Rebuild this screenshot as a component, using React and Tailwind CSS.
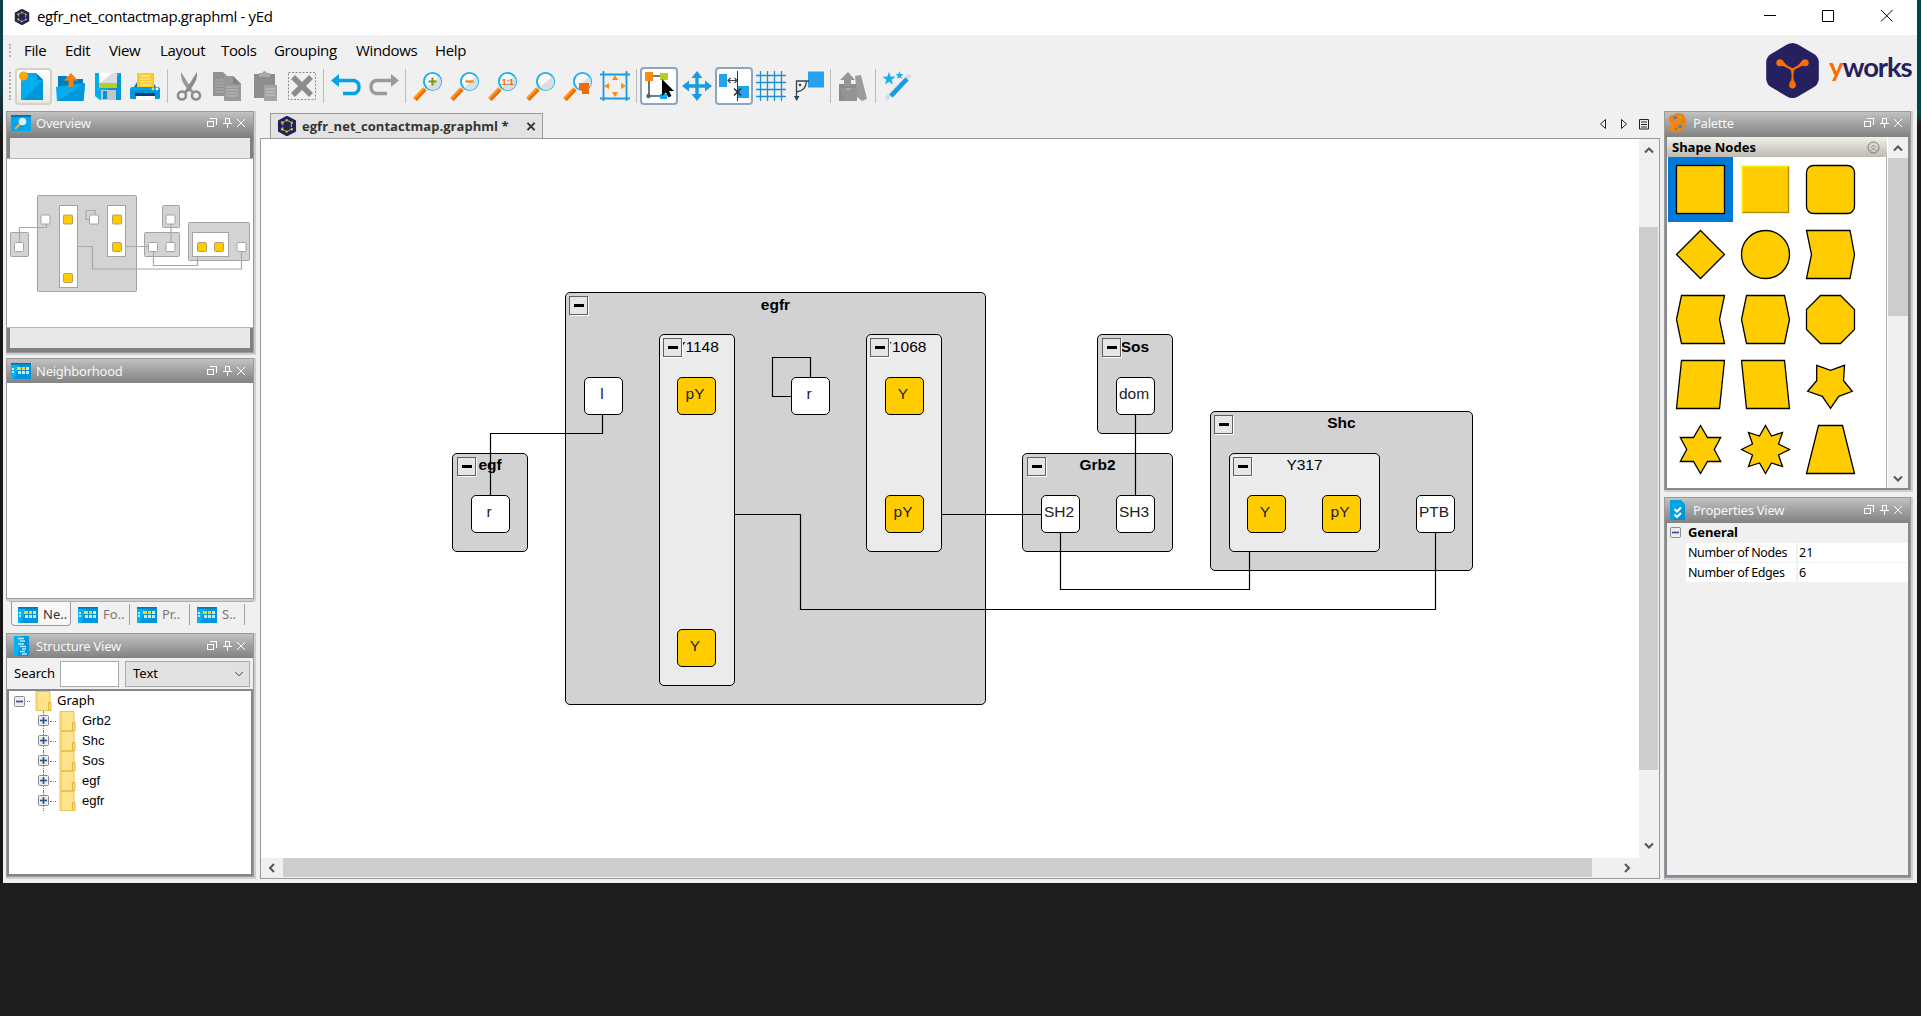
import React from "react";

const HEAD_GRAD = "bg-linear-to-b from-[#c2c2c2] via-[#a0a0a0] to-[#828282]";

/* ---------- logos ---------- */
function YedLogo({ className }) {
  return (
    <svg viewBox="0 0 20 20" className={className}>
      <path d="M10 .5 18.3 5v10L10 19.5 1.7 15V5z" fill="#25205f" stroke="#25205f" strokeWidth="1.500" strokeLinejoin="round" />
      <path d="M8.3 5.2 5.8 6.6v3M5.8 11v2.6l3 1.6M10.5 15.3l3.2-1.7M11 4.7l3 1.7M14.3 8v3" fill="none" stroke="#b5d81c" strokeWidth=".9" />
      <g fill="#b5d81c">
        <circle cx="9.7" cy="4.3" r="1.2" /><circle cx="5.2" cy="6.6" r="1.3" /><circle cx="14.8" cy="6.8" r="1.2" />
        <circle cx="5.2" cy="13.2" r="1.3" /><circle cx="9.7" cy="15.6" r="1.2" /><circle cx="14.8" cy="13.2" r="1.2" />
      </g>
    </svg>
  );
}

function YWorks() {
  return (
    <div className="mt-[7px] mr-[5px] flex items-start">
      <svg viewBox="0 0 53 57" className="h-[57px] w-[53px]">
        <path d="M21 2.5Q26.500 -.5 32 2.500L48 12Q52.500 15 52.800 19.500V37Q52.500 42 48 45L32 54.500Q26.500 57.500 21 54.500L5 45Q.5 42 .2 37V19.500Q.5 15 5 12z" fill="#25205f" />
        <path d="M12.500 20.500Q21 24.500 26.500 27.500Q32 24.500 40.500 20.500M26.500 27.500V42" fill="none" stroke="#ff6c00" strokeWidth="2" />
        <path d="M24 26.500l2.500 2.800 2.500-2.800-2.500 7z" fill="#ff6c00" />
        <circle cx="13.800" cy="20.800" r="3.500" fill="#ff6c00" /><circle cx="39.200" cy="20.800" r="3.500" fill="#ff6c00" />
        <path d="M26.500 34c.5 5 3.400 5.500 3.400 9a3.400 3.400 0 0 1-6.800 0c0-3.500 2.900-4 3.400-9zM15 17.500c3 1.500 4 4.500 8 7.500-4-1.500-6.500-1-9.500-1zM38 17.500c-3 1.500-4 4.500-8 7.500 4-1.500 6.500-1 9.500-1z" fill="#ff6c00" />
      </svg>
      <div className="mt-[6px] ml-[10px] w-[83px] text-[27.500px] leading-[38px] font-bold tracking-[-1.1px] whitespace-nowrap text-[#25205f] font-['Lato',sans-serif]">
        <span className="text-[#ff6c00]">y</span>works
      </div>
    </div>
  );
}

/* ---------- toolbar icons ---------- */
const Ic = ({ children }) => <svg viewBox="0 0 30 30" className="h-[30px] w-[30px] shrink-0">{children}</svg>;

const NewIcon = () => (
  <div className="flex h-[37px] w-[37px] items-center rounded-[4px] border-2 border-[#d2d2c6] bg-linear-to-b from-[#fefefd] to-[#e9e9e2] pl-[1px]">
    <Ic>
      <path d="M3 2h15l7 7v20H3z" fill="#00adef" /><path d="M25 9v20H5z" fill="#0095da" /><path d="M18 2l7 7h-5z" fill="#0080c4" />
      <circle cx="5.500" cy="5" r="4.600" fill="#ffa30f" />
    </Ic>
  </div>
);
const OpenIcon = () => (
  <Ic>
    <path d="M2 5h9l2 3h14v12H2z" fill="#0080bf" />
    <path d="M0 16l29-4-1.500 18H1z" fill="#00adef" /><path d="M29 12l-1.500 18H1z" fill="#0098dc" />
    <path d="M15 2l7 7.500h-4.500V16h-5V9.500H8z" fill="#f57f17" />
  </Ic>
);
const SaveIcon = () => (
  <Ic>
    <path d="M2 2h26v27H7l-5-4z" fill="#00adef" /><path d="M28 2v27H7z" fill="#0095da" />
    <path d="M6 2h18v15H6z" fill="#d9dde1" /><path d="M6 2h13L7 12H6z" fill="#fff" /><path d="M6 12h18v5H6z" fill="#b3d020" />
    <path d="M8 19h15v10H8z" fill="#c4c4c4" /><path d="M10 20h4v8h-4z" fill="#0095da" />
  </Ic>
);
const PrintIcon = () => (
  <Ic>
    <path d="M4 16l3-5h16l3 5z" fill="#0075b8" />
    <path d="M7 2h17v16H7z" fill="#ffc91f" /><path d="M10 5h10M10 8h11M10 11h11M10 14h11" stroke="#fff3c4" strokeWidth="1.200" />
    <rect y="16" width="30" height="12" rx="2" fill="#00a3e6" /><path d="M0 19h30v7q0 2-2 2H2q-2 0-2-2z" fill="#0095da" />
    <path d="M6 24h19v5H6z" fill="#fff" /><path d="M5 22h20v3H5z" fill="#073f78" />
    <circle cx="23" cy="18" r="1.400" fill="#d8e22c" /><circle cx="27" cy="18" r="1.400" fill="#e8f4fb" />
  </Ic>
);
const CutIcon = () => (
  <Ic>
    <g stroke="#8b8b8b" fill="none"><circle cx="8" cy="24.500" r="4" strokeWidth="2.600" /><circle cx="22" cy="24.500" r="4" strokeWidth="2.600" /></g>
    <path d="M7 1l10.500 16.500L20 21l-3 .8-3.500-3.500C9 12 6.500 8 7 1z" fill="#999" /><path d="M23 1L12.500 17.500 10 21l3 .8 3.500-3.500C21 12 23.500 8 23 1z" fill="#8b8b8b" />
  </Ic>
);
const CopyIcon = () => (
  <Ic>
    <path d="M1 1h10l6 6v18H1z" fill="#929292" /><path d="M3 9h10M3 12h10M3 15h10M3 18h10M3 21h10" stroke="#b0b0b0" />
    <path d="M12 5h9l8 8v18H12z" fill="#999" /><path d="M21 5l8 8h-8z" fill="#828282" /><path d="M14 16h12M14 19h12M14 22h12M14 25h12" stroke="#bcbcbc" />
  </Ic>
);
const PasteIcon = () => (
  <Ic>
    <path d="M4 3h21v24H4z" fill="#8d8d8d" /><path d="M9 2h3q2.500-4 5 0h3v4H9z" fill="#a8a8a8" />
    <path d="M14 14h13v16H14z" fill="#a3a3a3" /><path d="M16 18h9M16 21h9M16 24h9" stroke="#c8c8c8" strokeWidth="1.200" />
  </Ic>
);
const DeleteIcon = () => (
  <Ic>
    <rect x="1.500" y="1.500" width="27" height="27" fill="none" stroke="#8c8c8c" strokeDasharray="2 1.500" />
    <path d="M6 6l18 18M24 6L6 24" stroke="#8c8c8c" strokeWidth="5.500" />
  </Ic>
);
const UndoIcon = () => (
  <Ic><path d="M4 9.500h19q5 1 5 6.500T23 22.500H12" fill="none" stroke="#00a3e8" strokeWidth="3.400" /><path d="M0 9.500l8-6.500v13z" fill="#00a3e8" /></Ic>
);
const RedoIcon = () => (
  <Ic><path d="M26 9.500H7q-5 1-5 6.500T7 22.500h11" fill="none" stroke="#9a9a9a" strokeWidth="3.400" /><path d="M30 9.500l-8-6.500v13z" fill="#9a9a9a" /></Ic>
);
const Lens = ({ children }) => (
  <Ic>
    <path d="M2 28.500L12 18" stroke="#ef6c00" strokeWidth="4.600" /><path d="M1 27.500L11 17" stroke="#ff9a1f" strokeWidth="2" />
    <circle cx="19.500" cy="10.500" r="8.600" fill="#fafafa" stroke="#18aef0" strokeWidth="1.900" />
    <path d="M26 5.500a7.500 7.500 0 0 1-12 11z" fill="#d9dee1" />
    {children}
  </Ic>
);
const ZoomIn = () => <Lens><path d="M15.500 10.500h8M19.500 6.500v8" stroke="#7c9d10" strokeWidth="2.200" /></Lens>;
const ZoomOut = () => <Lens><path d="M15.500 10.500h8" stroke="#f57c14" strokeWidth="2.200" /></Lens>;
const ZoomOne = () => (
  <Lens><text x="19.500" y="14" textAnchor="middle" className="text-[9.500px] font-bold tracking-[-0.5px] font-['Liberation_Sans',sans-serif]" fill="#ef6c00">1:1</text></Lens>
);
const ZoomPlain = () => <Lens />;
const ZoomArea = () => <Lens><path d="M16 12h10v11h-7v-4h-3z" fill="#ef6c00" /></Lens>;
const FitIcon = () => (
  <Ic>
    <path d="M0 3.500h30M0 27.500h30M3.500 0v30M26.500 0v30" stroke="#1a9be0" strokeWidth="1.800" />
    <path d="M15 4l3 5h-6zM15 26l3-5h-6zM4 15l5-3v6zM26 15l-5-3v6z" fill="#ff8a0c" />
  </Ic>
);
const Pressed = ({ children }) => (
  <div className="flex h-[38px] w-[38px] items-center justify-center rounded-[4px] border-2 border-[#8ba6bd] bg-white">{children}</div>
);
const EditIcon = () => (
  <Pressed>
    <Ic>
      <path d="M5 9v16h16M9 5h12" fill="none" stroke="#44555f" strokeWidth="1.600" />
      <path d="M1 1h8v9H1z" fill="#ff8a0c" /><path d="M16 2h8v7h-8z" fill="#b3d020" /><path d="M16 23h7v5h-7z" fill="#00adef" />
      <circle cx="4.500" cy="25" r="2.200" fill="#53646e" />
      <path d="M18 8v17l4-3.500 2.500 5 3-1.500-2.500-5h5z" fill="#000" />
    </Ic>
  </Pressed>
);
const MoveIcon = () => (
  <Ic>
    <path d="M15 4v22M4 15h22" stroke="#1a9be0" strokeWidth="3.400" />
    <path d="M15 0l5.500 7h-11zM15 30l5.500-7h-11zM0 15l7-5.500v11zM30 15l-7-5.500v11z" fill="#1a9be0" />
  </Ic>
);
const SnapIcon = () => (
  <Pressed>
    <Ic>
      <path d="M0 3h8v13H0z" fill="#25a2ee" /><path d="M19 15h11v12H19z" fill="#25a2ee" />
      <path d="M18.500 0v30" stroke="#333" /><path d="M9 9.500h9M11.500 7L9 9.500l2.500 2.500M15.500 7L18 9.500 15.500 12" fill="none" stroke="#37444d" strokeWidth="1.200" />
      <path d="M15 17.500l7 7M22 17.500l-7 7" stroke="#2a333a" strokeWidth="1.600" />
    </Ic>
  </Pressed>
);
const GridIcon = () => (
  <Ic><path d="M0 4.500h30M0 11.500h30M0 18.500h30M0 25.500h30M4.500 0v30M11.500 0v30M18.500 0v30M25.500 0v30" stroke="#1a8fd2" strokeWidth="1.300" /></Ic>
);
const OrthoIcon = () => (
  <Ic>
    <path d="M14 .5h16v16H14z" fill="#25a2ee" /><path d="M2.500 29V10H15M2.500 21Q12 20 12.500 10" fill="none" stroke="#37444d" strokeWidth="1.300" />
    <circle cx="6" cy="14" r="1.300" fill="#37444d" /><path d="M0 25h5.500l-2.700 5z" fill="#37444d" />
  </Ic>
);
const BookIcon = () => (
  <Ic>
    <path d="M1 13h18v17H1z" fill="#8b8b8b" /><path d="M10 1l7 8h-4v6H6V9H2z" fill="#969696" /><path d="M1 17h18v13H8z" fill="#949494" />
    <path d="M8 17h5v2H8z" fill="#aaa" /><path d="M17 5l6-1 6 24-5 2-5-4z" fill="#9b9b9b" />
  </Ic>
);
const Wand = () => (
  <Ic>
    <path d="M4 28L28 4" stroke="#d6dde2" strokeWidth="4" /><path d="M9 25L25 8" stroke="#1a9be0" strokeWidth="4.600" />
    <path d="M7 1l1.600 4.500 4.900.2L9.700 8.800 11 13.500 7 10.800 3 13.500l1.300-4.700L.5 5.700l4.900-.2zM17.500 0l1 3 3 .1-2.400 2 .8 3-2.400-1.800-2.500 1.800.9-3-2.400-2 3-.1z" fill="#18b0f2" />
  </Ic>
);
const Sep = () => <div className="h-[34px] w-px bg-[#bdbdbd]" />;

const TOOLBAR = [
  [NewIcon, "ml-[3px]"], [OpenIcon, "ml-[4px]"], [SaveIcon, "ml-[7px]"], [PrintIcon, "ml-[7px]"], [Sep, "ml-[7px]"],
  [CutIcon, "ml-[6px]"], [CopyIcon, "ml-[8px]"], [PasteIcon, "ml-[8px]"], [DeleteIcon, "ml-[7px]"], [Sep, "ml-[6px]"],
  [UndoIcon, "ml-[7px]"], [RedoIcon, "ml-[8px]"], [Sep, "ml-[6px]"],
  [ZoomIn, "ml-[7px]"], [ZoomOut, "ml-[7px]"], [ZoomOne, "ml-[8px]"], [ZoomPlain, "ml-[8px]"], [ZoomArea, "ml-[7px]"], [FitIcon, "ml-[7px]"], [Sep, "ml-[6px]"],
  [EditIcon, "ml-[3px]"], [MoveIcon, "ml-[4px]"], [SnapIcon, "ml-[3px]"], [GridIcon, "ml-[3px]"], [OrthoIcon, "ml-[8px]"], [Sep, "ml-[6px]"],
  [BookIcon, "ml-[7px]"], [Sep, "ml-[7px]"], [Wand, "ml-[6px]"],
];

/* ---------- docked panels ---------- */
function WinButtons() {
  return (
    <svg viewBox="0 0 39 12" className="h-[12px] w-[39px]" fill="none" stroke="#fff" shapeRendering="crispEdges">
      <path d="M.5 4.500h6v5h-6zM0 4h7M3 1.500h6.500v6M3 1h7" />
      <path d="M18.500 1.500h4v5h-4zM16 6.500h9M20.500 7v4" />
      <path d="M30 2l8 8M38 2l-8 8" shapeRendering="auto" />
    </svg>
  );
}

function Panel({ icon, title, className, header, children }) {
  return (
    <section className={`flex flex-col border border-[#9a9a9a] shadow-[1px_1px_0_1px_#cfcfcf] ${className}`}>
      <header className={`flex shrink-0 items-center pr-[7px] ${HEAD_GRAD} ${header}`}>
        <span className="flex w-[25px] items-center">{icon}</span>
        <span className="grow text-[13px] leading-[18px] tracking-[-0.25px] text-[#f6f6f6]">{title}</span>
        <WinButtons />
      </header>
      {children}
    </section>
  );
}

const OverviewIcon = () => (
  <svg viewBox="0 0 20 16" className="h-[16px] w-[20px]"><path d="M0 0h20v16H0z" fill="#00a8f0" /><path d="M0 0h20v2H0z" fill="#0077b8" /><path d="M4 14l5-5" stroke="#ffab1f" strokeWidth="2" /><circle cx="11.500" cy="6.500" r="3.800" fill="#d5f1ff" /></svg>
);
const DockIcon = () => (
  <svg viewBox="0 0 20 16" className="h-[16px] w-[20px]">
    <path d="M0 0h20v16H0z" fill="#0095da" /><path d="M0 2h8L3 16H0z" fill="#00b4f4" /><path d="M0 0h20v1.500H0z" fill="#0077b8" />
    <path d="M6 4h4v3H6zM11 4h3v3h-3z" fill="#ffd21f" /><path d="M15 4h3v3h-3zM7 8h3v3H7zM11 8h3v3h-3zM15 8h3v3h-3zM1 5h2v2H1zM1 8h2v2H1z" fill="#cfe8f6" />
  </svg>
);
const StructIcon = () => (
  <svg viewBox="0 0 20 20" className="h-[20px] w-[20px]"><path d="M3 0h15v20H3z" fill="#0098dc" /><path d="M3 0h9L6 20H3z" fill="#00b4f4" /><path d="M7 2.500h6M9 5h5M7 8h6M9 10.500h6M11 13h4M9 15.500h5M11 18h5" stroke="#c3e6f8" strokeWidth="1.300" /></svg>
);
const PaletteIcon = () => (
  <svg viewBox="0 0 20 20" className="h-[20px] w-[20px]">
    <path d="M7 2q6-2 8 1t2 6-3 6-7 3-5-2 2-3-1-5 6-6z" fill="#f58216" stroke="#f58216" strokeWidth="2.500" strokeLinejoin="round" />
    <circle cx="7" cy="4.500" r="1.600" fill="#0095da" /><circle cx="12" cy="4" r="1.400" fill="#a7c51a" /><circle cx="15" cy="8" r="1.500" fill="#8aa61a" /><circle cx="12" cy="13.500" r="1.700" fill="#1a8fd2" /><circle cx="8" cy="16" r="1.500" fill="#6a9a2a" />
  </svg>
);
const PropsIcon = () => (
  <svg viewBox="0 0 20 20" className="h-[20px] w-[20px]"><path d="M2 0h11l4 4v16H2z" fill="#00a3e6" /><path d="M17 4v16H5z" fill="#0095da" /><path d="M6.500 9l2.500 2.500L13 7.500M6.500 14.500l2.500 2.500 4-4" fill="none" stroke="#fff" strokeWidth="2" /></svg>
);

/* miniature of the graph */
const MINI_GROUPS = [
  [37.5, 195.5, 99, 96], [10.5, 232.5, 18, 24], [162.500, 205.500, 17, 22], [144.500, 232.500, 35, 24], [188.500, 222.500, 61, 38],
];
const MINI_INNER = [[59.500, 205.500, 18, 82], [107.500, 205.500, 18, 51], [192.500, 232.500, 36, 24]];
const MINI_NODES = [
  [45.500, 219.500, 0], [68, 219.500, 1], [94, 219.500, 0], [117, 219.500, 1], [170.500, 219.500, 0], [117, 247, 1], [68, 278, 1],
  [19, 247, 0], [153, 247, 0], [170.500, 247, 0], [202, 247, 1], [219, 247, 1], [241.500, 247, 0],
];
function MiniMap() {
  return (
    <svg viewBox="7 159 246 168" className="h-[170px] w-[246px] border-y border-[#b5b5b5] bg-white">
      {MINI_GROUPS.map(([x, y, w, h]) => <rect key={x} x={x} y={y} width={w} height={h} rx="1" fill="#d3d3d3" stroke="#a3a3a3" />)}
      {MINI_INNER.map(([x, y, w, h]) => <rect key={x} x={x} y={y} width={w} height={h} fill="#fff" stroke="#a3a3a3" />)}
      <path d="M46.500 224v3.500h-27V243M91 210.500h-5v9h5M95 215v-4.500h-8M78 246.500h14.500V269h149v-18M126 246.500h22M153.500 251v14.500h44V257M171 224v19" fill="none" stroke="#a8a8a8" strokeWidth="1.200" />
      {MINI_NODES.map(([x, y, on]) => (
        <rect key={`${x}-${y}`} x={x - 4.500} y={y - 4.500} width="9" height="9" rx="1" fill={on ? "#fc0" : "#fff"} stroke={on ? "#b8a060" : "#a3a3a3"} />
      ))}
    </svg>
  );
}

const Expander = ({ plus }) => (
  <svg viewBox="0 0 11 11" className="h-[11px] w-[11px] shrink-0">
    <rect x=".5" y=".5" width="10" height="10" rx="1" fill="#ededed" stroke="#8a8a8a" /><path d="M2 5.500h7" stroke="#34508f" strokeWidth="1.700" />
    {plus && <path d="M5.500 2v7" stroke="#34508f" strokeWidth="1.700" />}
  </svg>
);
const Folder = () => (
  <svg viewBox="0 0 17 20" className="h-[20px] w-[17px] shrink-0"><path d="M1 .5h14v19H1z" fill="#ffe48d" stroke="#eac54f" /><path d="M13.500 19.500v-8h2.500v8z" fill="#ffe17c" stroke="#e0b53a" /><path d="M1.500 1h1.500v18H1.500z" fill="#f5d468" /></svg>
);

const Arrow = ({ d }) => (
  <svg viewBox="0 0 12 12" className="h-[12px] w-[12px]"><path d={d} fill="none" stroke="#555" strokeWidth="2" /></svg>
);
const UP = "M2 8.500l4-4 4 4", DOWN = "M2 3.500l4 4 4-4", LEFT = "M8 2L4 6l4 4", RIGHT = "M4 2l4 4-4 4";

function LeftColumn() {
  return (
    <div className="flex w-[248px] flex-col">
      <Panel icon={<OverviewIcon />} title="Overview" header="h-[24px] pb-[2px] pl-[4px]" className="h-[242px]">
        <div className="flex grow flex-col bg-[#808080] pt-[2px]">
          <div className="mx-[3px] h-[20px] bg-[#e8e8e8]" />
          <MiniMap />
          <div className="mx-[3px] h-[20px] bg-[#e8e8e8]" />
        </div>
      </Panel>
      <Panel icon={<DockIcon />} title="Neighborhood" header="h-[24px] pl-[4px]" className="mt-[5px] h-[241px]">
        <div className="grow bg-white" />
      </Panel>
      <div className="mt-[2px] ml-[3px] flex h-[30px] border-t border-[#b0b0b0] text-[13px] text-[#777]">
        {["Ne..", "Fo..", "Pr..", "S.."].map((t, i) => (
          <div key={t} className={i === 0
            ? "ml-[2px] flex h-[24px] w-[60px] items-center rounded-b border border-t-0 border-[#9b9b9b] bg-[#f7f7f7] pt-[2px] pl-[6px] text-[#333]"
            : `mt-[2px] flex h-[21px] items-center border-r border-[#a0a0a0] pl-[7px] ${i === 3 ? "w-[55px]" : i === 1 ? "w-[59px]" : "w-[60px]"}`}>
            <DockIcon /><span className="ml-[5px]">{t}</span>
          </div>
        ))}
      </div>
      <Panel icon={<StructIcon />} title="Structure View" header="h-[24px] pl-[4px]" className="mt-[2px] h-[244px]">
        <div className="flex h-[31px] items-center pl-[7px] text-[13px]">
          <span className="w-[46px]">Search</span>
          <div className="h-[26px] w-[59px] border border-[#ababab] bg-white" />
          <div className="ml-[6px] flex h-[26px] w-[125px] items-center justify-between border border-[#ababab] bg-[#e1e1e1] pr-[5px] pl-[7px]">
            <span>Text</span>
            <svg viewBox="0 0 10 6" className="h-[6px] w-[10px]"><path d="M1 .8l4 4 4-4" fill="none" stroke="#444" /></svg>
          </div>
        </div>
        <div className="grow border-2 border-[#828790] bg-white">
          <div className="flex h-[20px] items-center pl-[5px] text-[13px]">
            <Expander /><span className="ml-[2px] w-[3px] border-t border-dotted border-[#777]" />
            <span className="ml-[5px]"><Folder /></span><span className="ml-[5px]">Graph</span>
          </div>
          {["Grb2", "Shc", "Sos", "egf", "egfr"].map((t) => (
            <div key={t} className="flex h-[20px] items-center pl-[29px] text-[13px] font-['Liberation_Sans',sans-serif]">
              <div className="flex h-[20px] flex-col items-center">
                <span className="h-[4px] border-l border-dotted border-[#777]" /><Expander plus />
                <span className="h-[5px] border-l border-dotted border-[#777]" />
              </div>
              <span className="ml-[1px] w-[6px] border-t border-dotted border-[#777]" />
              <span className="ml-[3px]"><Folder /></span><span className="ml-[6px]">{t}</span>
            </div>
          ))}
        </div>
      </Panel>
    </div>
  );
}

/* ---------- graph canvas ---------- */
const GROUPS = [
  { x: 565, y: 292, w: 421, h: 413, t: "egfr", top: true },
  { x: 452, y: 453, w: 76, h: 99, t: "egf", top: true, nudge: true },
  { x: 1097, y: 334, w: 76, h: 100, t: "Sos", top: true, nudge: true },
  { x: 1022, y: 453, w: 151, h: 99, t: "Grb2", top: true, nudge: true },
  { x: 1210, y: 411, w: 263, h: 160, t: "Shc", top: true },
  { x: 659, y: 334, w: 76, h: 352, t: "Y1148" },
  { x: 866, y: 334, w: 76, h: 218, t: "Y1068" },
  { x: 1229, y: 453, w: 151, h: 99, t: "Y317" },
];
const NODES = [
  [584, 377, "l"], [677, 377, "pY", 1], [791, 377, "r"], [885, 377, "Y", 1], [885, 495, "pY", 1], [677, 629, "Y", 1], [471, 495, "r"],
  [1116, 377, "dom"], [1041, 495, "SH2"], [1116, 495, "SH3"], [1247, 495, "Y", 1], [1322, 495, "pY", 1], [1416, 495, "PTB"],
];
const EDGES = "M602.500 415V433.500H490.500V495M810.500 377V357.500H772.500V396.500H791M735 514.500H800.500V609.500H1435.500V533M942 514.500H1041M1060.500 533V589.500H1249.500V552M1135.500 415V495";

function Graph() {
  return (
    <div className="relative h-[719px] w-[1378px] overflow-hidden bg-white font-['Liberation_Sans',sans-serif] text-[15.500px] leading-[18px]">
      {GROUPS.map((g) => (
        <div key={g.t} className={`absolute rounded-[5px] border border-black text-center ${g.top ? "bg-[#d2d2d2] font-bold" : "bg-[#ebebeb]"}`}
          style={{ left: g.x - 261, top: g.y - 139, width: g.w, height: g.h }}>
          <div className={g.y === 453 || g.y === 411 ? "mt-[2px] text-black" : "mt-[3px] text-black"}>{g.t}</div>
          <div className={`absolute top-[3px] flex h-[19px] w-[19px] items-center justify-center border border-[#606060] bg-[#e6e6e6] shadow-[1px_1px_0_#fff] ${g.nudge ? "left-[4px]" : "left-[3px]"}`}>
            <div className="h-[3px] w-[10px] bg-black" />
          </div>
        </div>
      ))}
      <svg viewBox="261 139 1378 719" className="absolute inset-0 h-[719px] w-[1378px]"><path d={EDGES} fill="none" stroke="#000" strokeWidth="1.200" /></svg>
      {NODES.map(([x, y, t, on]) => (
        <div key={`${x}-${y}`} className={`absolute h-[38px] w-[39px] rounded-[5px] border border-black pt-[7px] text-center text-[#222] ${on ? "bg-[#ffcc00]" : "bg-white"}`}
          style={{ left: x - 261, top: y - 139 }}>
          <div className="-mr-[3px] -ml-[4px] -translate-x-px">{t}</div>
        </div>
      ))}
    </div>
  );
}

function Editor() {
  return (
    <div className="ml-[6px] flex w-[1400px] flex-col">
      <div className="flex h-[27px] items-end">
        <div className="ml-[10px] flex h-[25px] w-[273px] items-center border border-b-0 border-[#9a9a9a] bg-[#e3e3e3] pl-[6px]">
          <YedLogo className="h-[20px] w-[20px]" />
          <span className="ml-[5px] w-[219px] pt-[1px] text-[13px] font-bold tracking-[0.05px] whitespace-nowrap text-[#333] font-['Open_Sans',sans-serif]">egfr_net_contactmap.graphml *</span>
          <svg viewBox="0 0 10 10" className="ml-[5px] h-[9px] w-[10px]"><path d="M1 1l8 8M9 1L1 9" stroke="#333" strokeWidth="2.200" /></svg>
        </div>
        <svg viewBox="0 0 50 12" className="mb-[8px] ml-[1056px] h-[12px] w-[50px]" fill="none" stroke="#222">
          <path d="M6.500 1.500v9l-5-4.500zM22.500 1.500v9l5-4.500zM40.500 1.500h9v9.500h-9zM42 4h6M42 6.500h6M42 9h6" />
        </svg>
      </div>
      <div className="h-[741px] border border-[#9a9a9a] bg-[#f0f0f0]">
        <div className="flex h-[719px]">
          <Graph />
          <div className="flex w-[19px] flex-col items-center bg-[#f0f0f0]">
            <div className="flex h-[88px] pt-[5px]"><Arrow d={UP} /></div>
            <div className="h-[543px] w-full bg-[#cdcdcd]" />
            <div className="mt-[70px]"><Arrow d={DOWN} /></div>
          </div>
        </div>
        <div className="flex h-[19px] items-center">
          <div className="flex w-[22px] pl-[5px]"><Arrow d={LEFT} /></div>
          <div className="h-full w-[1309px] bg-[#cdcdcd]" />
          <div className="ml-[29px]"><Arrow d={RIGHT} /></div>
        </div>
      </div>
    </div>
  );
}

/* ---------- palette ---------- */
const SHAPES = [
  <rect x="8.500" y="8.500" width="48" height="48" />,
  <g stroke="none"><rect x="9" y="9" width="47" height="47" /><path d="M9 56V9h47" fill="none" stroke="#ffff00" strokeWidth="1.500" /><path d="M9.500 55.500H55.500V9.500" fill="none" stroke="#b58f00" strokeWidth="1.500" /></g>,
  <rect x="8.500" y="8.500" width="48" height="48" rx="7" />,
  <path d="M32.500 8.500l24 24-24 24-24-24z" />,
  <circle cx="32.500" cy="32.500" r="24" />,
  <path d="M8.500 8.500H52l4.500 24-4.500 24H8.500l5-24z" />,
  <path d="M13.500 8.500h43l-5 24 5 24h-43l-5-24z" />,
  <path d="M13.500 8.500h38l5 24-5 24h-38l-5-24z" />,
  <path d="M22.500 8.500h20l14 14v20l-14 14h-20l-14-14v-20z" />,
  <path d="M13.500 8.500h43l-5 48h-43z" />,
  <path d="M8.500 8.500h43l5 48h-43z" />,
  <path d="M18.700 13.300l13.800 5 14-5-1 15.400 8.800 10.600-13.600 5-8.200 12-8.200-12-14.600-5 9-10.600z" />,
  <path d="M32.500 8.500l7 12h13.200l-6.400 12 6.400 12H39.500l-7 12-7-12H12.300l6.400-12-6.400-12h13.200z" />,
  <path d="M32.500 8.500l6 10.500 11-3.500-4 11.500 11 5.500-11 5.500 4 11.500-11-3.500-6 10.500-6-10.500-11 3.500 4-11.500-11-5.500 11-5.500-4-11.500 11 3.500z" />,
  <path d="M20.500 8.500h24l12 48h-48z" />,
];

function RightColumn() {
  return (
    <div className="ml-[4px] flex w-[247px] flex-col">
      <Panel icon={<PaletteIcon />} title="Palette" header="h-[25px] pb-[3px] pl-[3px]" className="h-[379px]">
        <div className="flex grow border-2 border-t-0 border-[#858a94] bg-white">
          <div className="flex w-[221px] flex-col">
            <div className="flex h-[20px] items-center justify-between bg-linear-to-b from-[#f2f1ec] to-[#bdbbb3] pt-[1px] pr-[7px] pl-[5px] text-[13px] font-bold">
              Shape Nodes
              <svg viewBox="0 0 13 13" className="h-[13px] w-[13px]" fill="none" stroke="#77756a"><circle cx="6.500" cy="6.500" r="5.500" /><path d="M4 6.500L6.500 4 9 6.500M4 9.500L6.500 7 9 9.500" strokeWidth=".9" /></svg>
            </div>
            <div className="grid h-[331px] w-[220px] grid-cols-[65px_65px_65px] content-start border-r border-[#b0aea4] pl-px">
              {SHAPES.map((s, i) => (
                <svg key={i} viewBox="0 0 65 65" className={`h-[65px] w-[65px] ${i === 0 ? "bg-[#0078d7]" : ""}`} fill="#ffcc00" stroke="#000" strokeWidth="1.300">{s}</svg>
              ))}
            </div>
          </div>
          <div className="ml-px flex w-[20px] flex-col items-center bg-[#f0f0f0]">
            <div className="flex h-[21px] pt-[5px]"><Arrow d={UP} /></div>
            <div className="h-[158px] w-full bg-[#cdcdcd]" />
            <div className="mt-[157px]"><Arrow d={DOWN} /></div>
          </div>
        </div>
      </Panel>
      <Panel icon={<PropsIcon />} title="Properties View" header="h-[25px] pb-[2px] pl-[3px]" className="mt-[7px] h-[381px]">
        <div className="grow border-x-2 border-b-2 border-[#858a94] pl-[2px] text-[12.500px] leading-[19px]">
          <div className="flex h-[19px] items-center text-[13px]"><span className="ml-[1px]"><Expander /></span><span className="ml-[7px] font-bold tracking-[-0.1px]">General</span></div>
          {[["Number of Nodes", "21"], ["Number of Edges", "6"]].map(([k, v], i) => (
            <div key={k} className={`mb-px ml-[17px] flex h-[19px] gap-[2px] ${i === 0 ? "mt-px" : ""}`}>
              <div className="w-[110px] bg-white pl-[2px] tracking-[-0.4px] whitespace-nowrap">{k}</div><div className="w-[110px] bg-white pl-[1px]">{v}</div>
            </div>
          ))}
        </div>
      </Panel>
    </div>
  );
}

const MENU = [
  ["File", "w-[41px]"], ["Edit", "w-[44px]"], ["View", "w-[51px]"], ["Layout", "w-[61px]"], ["Tools", "w-[53px]"],
  ["Grouping", "w-[82px]"], ["Windows", "w-[79px]"], ["Help", "w-[40px]"],
];

export default function App() {
  return (
    <div className="flex h-[1016px] w-[1921px] flex-col overflow-hidden bg-[#1e1e1e] font-['Noto_Sans',sans-serif] text-black">
      <div className="flex h-[883px]">
        <div className="h-full w-[3px] bg-linear-to-b from-[#10404a] from-10% to-[#161616] to-15%" />
        <div className="flex w-[1914px] flex-col bg-[#f0f0f0]">
          <div className="flex h-[35px] items-center bg-white pb-[2px] pl-[11px] text-[15px]">
            <YedLogo className="h-[16px] w-[16px]" />
            <span className="ml-[7px] grow tracking-[-0.35px] font-['Open_Sans',sans-serif]">egfr_net_contactmap.graphml - yEd</span>
            <svg viewBox="0 0 130 14" className="mr-[24px] mb-[3px] h-[14px] w-[130px]" fill="none" stroke="#000"><path d="M1 7.500h12M59.500 2.500h11v11h-11zM118 2l11.500 11.500M129.500 2L118 13.500" /></svg>
          </div>
          <div className="flex h-[76px] justify-between">
            <div>
              <div className="flex h-[31px] items-center pl-[6px] text-[15px] font-['Open_Sans',sans-serif]">
                <span className="h-[13px] border-l-2 border-dotted border-[#b5b5b5]" /><span className="w-[13px]" />
                {MENU.map(([t, w]) => <span key={t} className={`${w} tracking-[-0.35px]`}>{t}</span>)}
              </div>
              <div className="flex h-[40px] items-center pl-[6px]">
                <span className="h-[28px] w-[3px] border-l-2 border-dotted border-[#b0b0b0]" />
                {TOOLBAR.map(([Item, ml], i) => <div key={i} className={`${ml} shrink-0`}><Item /></div>)}
              </div>
            </div>
            <YWorks />
          </div>
          <div className="flex pl-[3px]">
            <LeftColumn />
            <Editor />
            <RightColumn />
          </div>
        </div>
        <div className="h-full w-[4px] bg-linear-to-b from-[#00474c] from-13% to-[#1b1b1b] to-14%" />
      </div>
    </div>
  );
}
